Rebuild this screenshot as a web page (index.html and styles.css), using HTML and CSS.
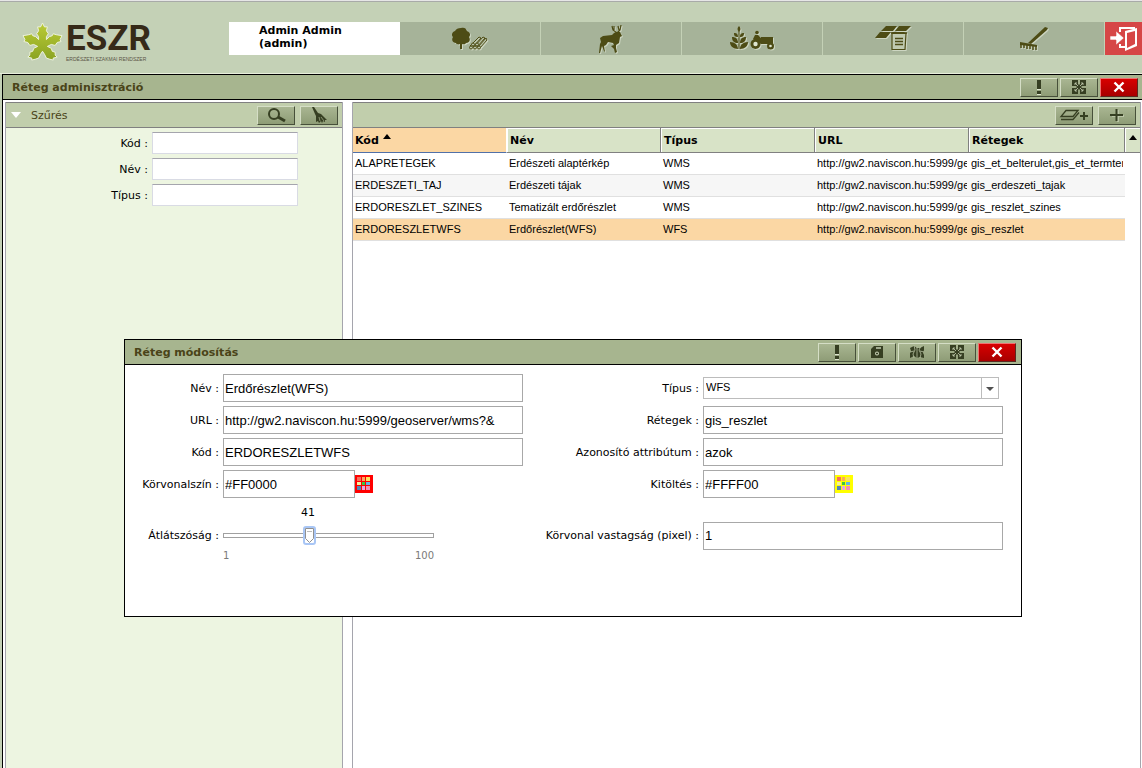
FILE: index.html
```
<!DOCTYPE html>
<html lang="hu">
<head>
<meta charset="utf-8">
<title>ESZR</title>
<link rel="stylesheet" href="styles.css">
</head>
<body>
<svg class="defs" aria-hidden="true">
  <symbol id="i-alert" viewBox="0 0 16 16"><path d="M6 1h4v9H6z" fill="#363f22"/><path d="M6 12h4v3H6z" fill="#363f22"/><path d="M6 10h4v1H6zM6 15h4v1H6z" fill="#dfe6d0"/></symbol>
  <symbol id="i-expand" viewBox="0 0 16 16"><path d="M1 1h6v4l1 1 1-1V1h6v6h-4l-1 1 1 1h4v6H9v-4l-1-1-1 1v4H1V9h4l1-1-1-1H1z" fill="#363f22"/><path d="M4 6V4h2M4 4l3 3M12 6V4h-2M12 4L9 7M4 10v2h2M4 12l3-3M12 10v2h-2M12 12L9 9" stroke="#c6d0b4" stroke-width=".8" fill="none"/></symbol>
  <symbol id="i-close" viewBox="0 0 16 16"><path d="M3.500 3.500l9 9M12.500 3.500l-9 9" stroke="#fff" stroke-width="2.400"/></symbol>
  <symbol id="i-plus" viewBox="0 0 16 16"><path d="M3 9h12M9 3v12" stroke="#c6d0b4" stroke-width="1.500"/><path d="M1 8h13M7.500 2v12" stroke="#363f22" stroke-width="2"/></symbol>
</svg>
<header class="top">
  <div class="logo">
    <svg class="leaf" viewBox="0 0 42 42" aria-hidden="true">
      <defs><linearGradient id="lg" gradientUnits="userSpaceOnUse" x1="0" y1="0" x2="0" y2="42"><stop offset="0" stop-color="#bccc38"/><stop offset="1" stop-color="#86a01f"/></linearGradient></defs>
      <path d="M21 1l2 4 3 0-1 4 2 3-2 3 0 3 3-3 3-1 1-2 3 1 6 1-2 4 1 2-4 1-2 3-4-1-4 2 4 2 1 3 3 1 0 3 2 2-4 1 0 2-4-1-3-1-2-4-2-3-2 3-2 4-3 1-4 1 0-2-4-1 2-2 0-3 3-1 1-3 4-2-4-2-4 1-2-3-4-1 1-2-2-4 6-1 3-1 1 2 3 1 3 3 0-3-2-3 2-3-1-4 3 0z" fill="url(#lg)" stroke="#eef3dc" stroke-width="1"/>
    </svg>
    <div class="brand"><span class="brand-name">ESZR</span><span class="brand-sub">ERDÉSZETI SZAKMAI RENDSZER</span></div>
  </div>
  <div class="user">Admin Admin<br>(admin)</div>
  <nav class="menu">
    <button class="menu-item" aria-label="Erdő"><svg width="36" height="24" viewBox="0 0 36 24" fill="#4d4c15"><path d="M9 1c3-1 5 0 6 3 3 1 4 4 2 6 2 3 0 6-3 6-1 2-3 1-4 1v5H8v-5c-2 1-4 0-4-1-3 0-5-3-3-6-2-2-1-5 2-6 1-2 3-3 6-3z"/><g stroke="#4d4c15" fill="#b8c3a8"><path d="M18 19l9-9 2 1-8 9M22 20l9-10 2 1-8 9M26 20l8-9 1 2-7 8"/><circle cx="19" cy="20.500" r="1.500"/><circle cx="23" cy="20.500" r="1.500"/><circle cx="27" cy="20.500" r="1.500"/><circle cx="21" cy="17.500" r="1.500"/><circle cx="25" cy="17.500" r="1.500"/></g></svg></button>
    <button class="menu-item" aria-label="Vad"><svg width="24" height="30" viewBox="0 0 24 30"><path d="M18 9l-4-3-1-4M15 6l0-4M18 9l3-3 1-5M20 6l-1-4" stroke="#4d4c15" stroke-width="1.200" fill="none"/><path d="M17 8l4 0 2 4-2 1-1 6-3 2 0 3 1 4-2 1-1-4-3-3 3-1-1-2-5-1-2 3-2 1 1 6-1-1-2-5-2 7-1 0 1-9 1-2-1-4 3-2 9-1 2-2z" fill="#4d4c15"/></svg></button>
    <button class="menu-item" aria-label="Gazdálkodás"><svg width="44" height="26" viewBox="0 0 44 26" fill="#4d4c15"><path d="M9 0c2 2 2 4 0 6-2-2-2-4 0-6zM4 7c3 0 4 1 4 4-3 0-4-1-4-4zM14 7c-3 0-4 1-4 4 3 0 4-1 4-4zM2 11c4 0 6 2 6 6-4 0-6-2-6-6zM16 11c-4 0-6 2-6 6 4 0 6-2 6-6zM0 16c5 0 8 3 8 7-5 0-8-3-8-7zM18 16c-5 0-8 3-8 7 5 0 8-3 8-7z"/><path d="M8.500 5h1v18h-1z"/><circle cx="27" cy="6.500" r="1.800"/><path d="M25 9h3l3 3v-1h12v7H31l-8-5z"/><circle cx="25.500" cy="18" r="5"/><circle cx="25.500" cy="18" r="2.200" fill="#dfe6d0"/><circle cx="40.500" cy="20" r="3.500"/><circle cx="40.500" cy="20" r="1.300" fill="#dfe6d0"/></svg></button>
    <button class="menu-item" aria-label="Jelentések"><svg width="38" height="26" viewBox="0 0 38 26"><path d="M12 0h11l-4 5H7zM25 0h12l-5 5H21zM6 6h11l-5 6H1zM19 6h12l-1 1H17z" fill="#4d4c15"/><path d="M18 7.500h14l-1 16H18z" fill="#c0cab0" stroke="#4d4c15" stroke-width="1.200"/><path d="M21 12.500h8M21 15.500h8M21 18.500h8M17 7h16" stroke="#4d4c15" stroke-width="1.400"/></svg></button>
    <button class="menu-item" aria-label="Karbantartás"><svg width="28" height="24" viewBox="0 0 28 24"><path d="M25 0l3 1-1 2-16 14-3-1z" fill="#4d4c15"/><path d="M0 15l17 3v2L0 18z" fill="#4d4c15"/><path d="M1 17v4M4 17v4M7 18v4M10 18v4M13 19v4M16 19v4" stroke="#4d4c15" stroke-width="1.500"/></svg></button>
  </nav>
  <button class="logout" aria-label="Kilépés"><svg width="28" height="24" viewBox="0 0 28 24"><path d="M10 5V1h14v2M10 17v3h6" fill="none" stroke="#fff" stroke-width="2"/><path d="M15 4l12-3v18l-12 5z" fill="#fff"/><path d="M17 6l8-2v13l-8 4z" fill="#d64646"/><path d="M0 9h6V4l8 7-8 7v-5H0z" fill="#fff" stroke="#d64646" stroke-width=".6"/></svg></button>
</header>

<main class="window">
  <div class="titlebar">
    <h1>Réteg adminisztráció</h1>
    <div class="tools">
      <button class="btn" aria-label="Hibajelzés"><svg><use href="#i-alert"/></svg></button>
      <button class="btn" aria-label="Teljes méret"><svg><use href="#i-expand"/></svg></button>
      <button class="btn danger" aria-label="Bezárás"><svg><use href="#i-close"/></svg></button>
    </div>
  </div>
  <div class="panes">
    <section class="filter">
      <div class="panel-head">
        <svg class="tri" width="10" height="6" viewBox="0 0 10 6"><path d="M0 0h10L5 6z" fill="#fff"/></svg>
        <h2>Szűrés</h2>
        <div class="tools wide">
          <button class="btn" aria-label="Keresés"><svg class="big" viewBox="0 0 20 16"><circle cx="8" cy="7" r="5" fill="none" stroke="#363f22" stroke-width="2"/><path d="M12 10l7 4" stroke="#363f22" stroke-width="3"/></svg></button>
          <button class="btn" aria-label="Törlés"><svg class="big" viewBox="0 0 20 16"><path d="M3 0h2l4 6 3 1 6 6-2 0 0 2-2-1-1 2-1-2-2 2-1-2-2 1 0-6-1-2z" fill="#363f22"/><path d="M10 10l1 4M12 10l3 4" stroke="#a9b591" stroke-width=".7"/></svg></button>
        </div>
      </div>
      <form class="filter-form">
        <label for="fk">Kód :</label><input id="fk" type="text">
        <label for="fn">Név :</label><input id="fn" type="text">
        <label for="ft">Típus :</label><input id="ft" type="text">
      </form>
    </section>
    <section class="grid">
      <div class="panel-head">
        <div class="tools wide">
          <button class="btn" aria-label="Réteg hozzáadása"><svg class="layers" viewBox="0 0 30 16"><path d="M7 3.500h12l-5 6H2zM2 12.500h12l6-7" fill="none" stroke="#363f22" stroke-width="1.300"/><path d="M21 9h8M25 5v8" stroke="#363f22" stroke-width="2"/></svg></button>
          <button class="btn" aria-label="Új"><svg><use href="#i-plus"/></svg></button>
        </div>
      </div>
      <table>
        <colgroup><col class="c"><col class="c"><col class="c"><col class="c"><col><col class="s"></colgroup>
        <thead><tr><th class="sorted">Kód <svg width="8" height="5" viewBox="0 0 8 5"><path d="M4 0l4 5H0z"/></svg></th><th>Név</th><th>Típus</th><th>URL</th><th>Rétegek</th><th class="corner"><svg width="8" height="5" viewBox="0 0 8 5"><path d="M4 0l4 5H0z"/></svg></th></tr></thead>
        <tbody>
          <tr><td>ALAPRETEGEK</td><td>Erdészeti alaptérkép</td><td>WMS</td><td><div class="clip">http://gw2.naviscon.hu:5999/geoserver</div></td><td><div class="clip">gis_et_belterulet,gis_et_termterulet</div></td></tr>
          <tr class="alt"><td>ERDESZETI_TAJ</td><td>Erdészeti tájak</td><td>WMS</td><td><div class="clip">http://gw2.naviscon.hu:5999/geoserver</div></td><td>gis_erdeszeti_tajak</td></tr>
          <tr><td>ERDORESZLET_SZINES</td><td>Tematizált erdőrészlet</td><td>WMS</td><td><div class="clip">http://gw2.naviscon.hu:5999/geoserver</div></td><td>gis_reszlet_szines</td></tr>
          <tr class="sel"><td>ERDORESZLETWFS</td><td>Erdőrészlet(WFS)</td><td>WFS</td><td><div class="clip">http://gw2.naviscon.hu:5999/geoserver</div></td><td>gis_reszlet</td></tr>
        </tbody>
      </table>
    </section>
  </div>
</main>

<div class="dialog" role="dialog" aria-labelledby="dt">
  <div class="titlebar">
    <h2 id="dt">Réteg módosítás</h2>
    <div class="tools">
      <button class="btn" aria-label="Hibajelzés"><svg><use href="#i-alert"/></svg></button>
      <button class="btn" aria-label="Mentés"><svg viewBox="0 0 16 16"><path d="M5 2h9v12H2V5z" fill="#363f22"/><path d="M7 4h5" stroke="#c6d0b4" stroke-width="1.500"/><circle cx="8" cy="9.500" r="2" fill="#c6d0b4"/><path d="M8 8.500v2M7 9.500h2" stroke="#363f22"/></svg></button>
      <button class="btn" aria-label="Térkép"><svg viewBox="0 0 16 16"><path d="M1 4l4-2 3 2 3 0 4-2v4l-1 3 1 2v3l-4-1-3 1-3-2-4 2V9l1-2z" fill="#363f22"/><path d="M5 1l1 5-2 4 1 4M8 3v11M12 2l-2 4 2 4-1 4M1 8l4-1M11 7l4 1" stroke="#b7c2a2" stroke-width=".8" fill="none"/></svg></button>
      <button class="btn" aria-label="Teljes méret"><svg><use href="#i-expand"/></svg></button>
      <button class="btn danger" aria-label="Bezárás"><svg><use href="#i-close"/></svg></button>
    </div>
  </div>
  <form class="edit-form">
    <label for="nev">Név :</label><input id="nev" type="text" value="Erdőrészlet(WFS)">
    <label for="tipus">Típus :</label><div class="select"><select id="tipus"><option>WFS</option></select></div>
    <label for="url">URL :</label><input id="url" type="text" value="http://gw2.naviscon.hu:5999/geoserver/wms?&amp;">
    <label for="ret">Rétegek :</label><input id="ret" type="text" value="gis_reszlet">
    <label for="kod">Kód :</label><input id="kod" type="text" value="ERDORESZLETWFS">
    <label for="azon">Azonosító attribútum :</label><input id="azon" type="text" value="azok">
    <label for="szin">Körvonalszín :</label>
    <div class="color"><input id="szin" type="text" value="#FF0000"><button type="button" class="pick red" aria-label="Színválasztó"><svg viewBox="0 0 18 18"><use href="#swatches"/></svg></button></div>
    <label for="kit">Kitöltés :</label>
    <div class="color"><input id="kit" type="text" value="#FFFF00"><button type="button" class="pick yellow" aria-label="Színválasztó"><svg viewBox="0 0 18 18"><g id="swatches"><path d="M2 2h4v4H2z" fill="#f6705c"/><path d="M7 2h3v4H7z" fill="#f8a860"/><path d="M11 2h4v4h-4z" fill="#fbe35c"/><path d="M2 7h4v3H2z" fill="#f4f0a0"/><path d="M7 7h3v3H7z" fill="#3fc83f"/><path d="M11 7h4v3h-4z" fill="#62b4e8"/><path d="M2 11h4v4H2z" fill="#5584b4"/><path d="M7 11h3v4H7z" fill="#e8a4e4"/><path d="M11 11h4v4h-4z" fill="#f48cb4"/></g></svg></button></div>
    <label for="atl">Átlátszóság :</label>
    <div class="slider"><output for="atl">41</output><input id="atl" type="range" min="1" max="100" value="41"><div class="ends"><span>1</span><span>100</span></div></div>
    <label for="vast">Körvonal vastagság (pixel) :</label><input id="vast" type="text" value="1">
  </form>
</div>
</body>
</html>
```
FILE: styles.css
```
* { box-sizing: border-box; }
body {
  margin: 0;
  min-height: 100vh;
  display: flex;
  flex-direction: column;
  background: #c4d1b6;
  border-top: 1px solid #e6e6e6;
  font: 11px/13px Verdana, "DejaVu Sans", sans-serif;
  color: #000;
  overflow: hidden;
}
button { padding: 0; border: 0; font: inherit; }
h1, h2 { margin: 0; font-size: 11px; }
.defs { position: absolute; width: 0; height: 0; }

.top {
  display: flex;
  align-items: flex-start;
  height: 73px;
  padding-top: 20px;
  border-top: 1px solid #a8aaa8;
  border-bottom: 1px solid #e8eedc;
}
.logo { display: flex; width: 229px; padding-left: 22px; gap: 3px; }
.leaf { width: 41px; height: 41px; }
.brand { display: flex; flex-direction: column; color: #362a18; white-space: nowrap; }
.brand-name { font: bold 35px/34px Roboto, "Liberation Sans", sans-serif; }
.brand-sub { font: 5px/7px "Liberation Sans", Arial, sans-serif; color: #5b5546; }
.user {
  width: 171px;
  height: 33px;
  padding: 2px 0 0 30px;
  background: #fff;
  font-weight: bold;
}
.menu { flex: 1; display: flex; gap: 1px; }
.menu-item {
  flex: 1;
  height: 33px;
  display: flex;
  align-items: center;
  justify-content: center;
  background: #a6b399;
}
.menu-item svg { filter: drop-shadow(1px 1px 0 #cdd6c2); }
.logout {
  width: 37px;
  height: 33px;
  margin-left: 1px;
  display: flex;
  align-items: center;
  justify-content: center;
  background: #d64646;
}

.window {
  flex: 1;
  display: flex;
  flex-direction: column;
  margin-left: 2px;
  border: solid #000;
  border-width: 1px 0 0 1px;
  background: #fff;
}
.titlebar {
  display: flex;
  align-items: center;
  justify-content: space-between;
  height: 25px;
  padding: 0 4px 0 9px;
  background: #a7b58f;
  border-bottom: 1px solid #000;
  color: #4a4318;
}
.tools { display: flex; gap: 2px; }
.wide { gap: 5px; margin-left: auto; }
.btn {
  width: 38px;
  height: 19px;
  display: flex;
  align-items: center;
  justify-content: center;
  border: 1px solid;
  border-color: #d5dec6 #47503a #47503a #d5dec6;
  background: linear-gradient(#a9b692, #8e9c76);
}
.btn svg { width: 16px; height: 16px; }
.btn .big { width: 20px; }
.btn .layers { width: 30px; }
.danger { border-color: #f07070 #5a2a20 #5a2a20 #f07070; background: linear-gradient(#d80000, #a80000); }

.panes { flex: 1; display: flex; gap: 9px; padding: 2px 1px 0 2px; }
.filter, .grid { border: solid #a5a5ad; border-width: 0 1px; }
.filter { width: 338px; background: #edf5e1; }
.grid { flex: 1; min-width: 0; }
.panel-head {
  display: flex;
  align-items: center;
  height: 26px;
  padding: 0 4px 0 5px;
  background: #c1ceac;
  border: solid #808080;
  border-width: 1px 0;
}
.panel-head h2 { margin-left: 10px; font-weight: normal; color: #4a4318; }
.filter-form {
  display: grid;
  grid-template-columns: 142px 146px;
  gap: 4px;
  padding-top: 4px;
  align-items: center;
  text-align: right;
}
.filter-form input {
  height: 22px;
  padding: 0 2px;
  border: 1px solid #d9dbe4;
  border-top-color: #a5a5ad;
  background: #fff;
}

table { width: 100%; table-layout: fixed; border-collapse: separate; border-spacing: 0; }
.c { width: 154px; }
.s { width: 15px; }
th {
  height: 25px;
  padding: 1px 0 0 3px;
  text-align: left;
  background: #d8e3c7;
  border: solid #808080;
  border-width: 0 1px 1px 0;
  box-shadow: inset 1px 1px #fff;
}
.sorted { padding: 0 2px; background: #fbd7a4; border-right-color: #fff; border-bottom-color: #5070a8; box-shadow: none; }
.sorted svg { vertical-align: 5px; }
.corner { padding: 0 0 6px 4px; line-height: 5px; border-right: 0; }
td {
  height: 22px;
  padding: 0 2px 1px;
  white-space: nowrap;
  font-family: "Liberation Sans", Arial, sans-serif;
  border-bottom: 1px solid #e0e0e0;
}
.clip { overflow: hidden; }
.alt td { background: #f6f6f6; }
.sel td { background: #fbd7a4; }

.dialog {
  position: absolute;
  top: 339px;
  left: 124px;
  right: 120px;
  min-height: 278px;
  background: #fff;
  border: 1px solid #000;
}
.dialog .titlebar { padding-right: 5px; }
.edit-form {
  display: grid;
  grid-template-columns: 94px 300px 1fr 300px;
  gap: 4px;
  padding: 9px 18px 0 0;
  align-items: center;
  text-align: right;
}
.edit-form input[type="text"] {
  width: 100%;
  height: 28px;
  padding: 0 1px;
  border: 1px solid #a8a8a8;
  font: 13px "Liberation Sans", Arial, sans-serif;
}
.select {
  width: 296px;
  display: flex;
  background: #fff;
  position: relative;
}
.select select {
  appearance: none;
  width: 100%;
  height: 22px;
  padding: 0 20px 2px 2px;
  border: 1px solid #bcbcbc;
  background: linear-gradient(#bcbcbc, #bcbcbc) right 16px top / 1px 100% no-repeat #fff;
  font: 11px "Liberation Sans", Arial, sans-serif;
}
.select::after {
  content: "";
  position: absolute;
  right: 5px;
  top: 10px;
  border: 4px solid transparent;
  border-top-color: #505050;
  border-bottom: 0;
}
.color { display: flex; align-items: center; }
.edit-form .color input { width: 132px; }
.pick { width: 18px; height: 18px; }
.pick svg { display: block; width: 18px; height: 18px; }
.red { background: #f00; }
.yellow { background: #ff0; }
.slider { width: 211px; padding: 4px 0 7px; text-align: left; }
.slider output { display: block; width: 170px; text-align: center; }
.slider input {
  appearance: none;
  display: block;
  width: 100%;
  height: 20px;
  margin: 6px 0 4px;
  background: transparent;
}
.slider input::-webkit-slider-runnable-track { height: 5px; border: 1px solid #a0a0a0; background: #fff; }
.slider input::-webkit-slider-thumb {
  appearance: none;
  width: 13px;
  height: 19px;
  margin-top: -8px;
  background: url("data:image/svg+xml,%3Csvg xmlns='http://www.w3.org/2000/svg' viewBox='0 0 13 19'%3E%3Crect x='1' y='1' width='11' height='17' rx='2' fill='%23fff' stroke='%23a9c6f5' stroke-width='2'/%3E%3Cpath d='M2.500 2.500h8v10l-4 4-4-4z' fill='%23fff' stroke='%23909090'/%3E%3Cpath d='M4 5.500h5' stroke='%23bbb'/%3E%3C/svg%3E");
}
.ends { display: flex; justify-content: space-between; color: #7a7a7a; font-size: 10px; }
```
